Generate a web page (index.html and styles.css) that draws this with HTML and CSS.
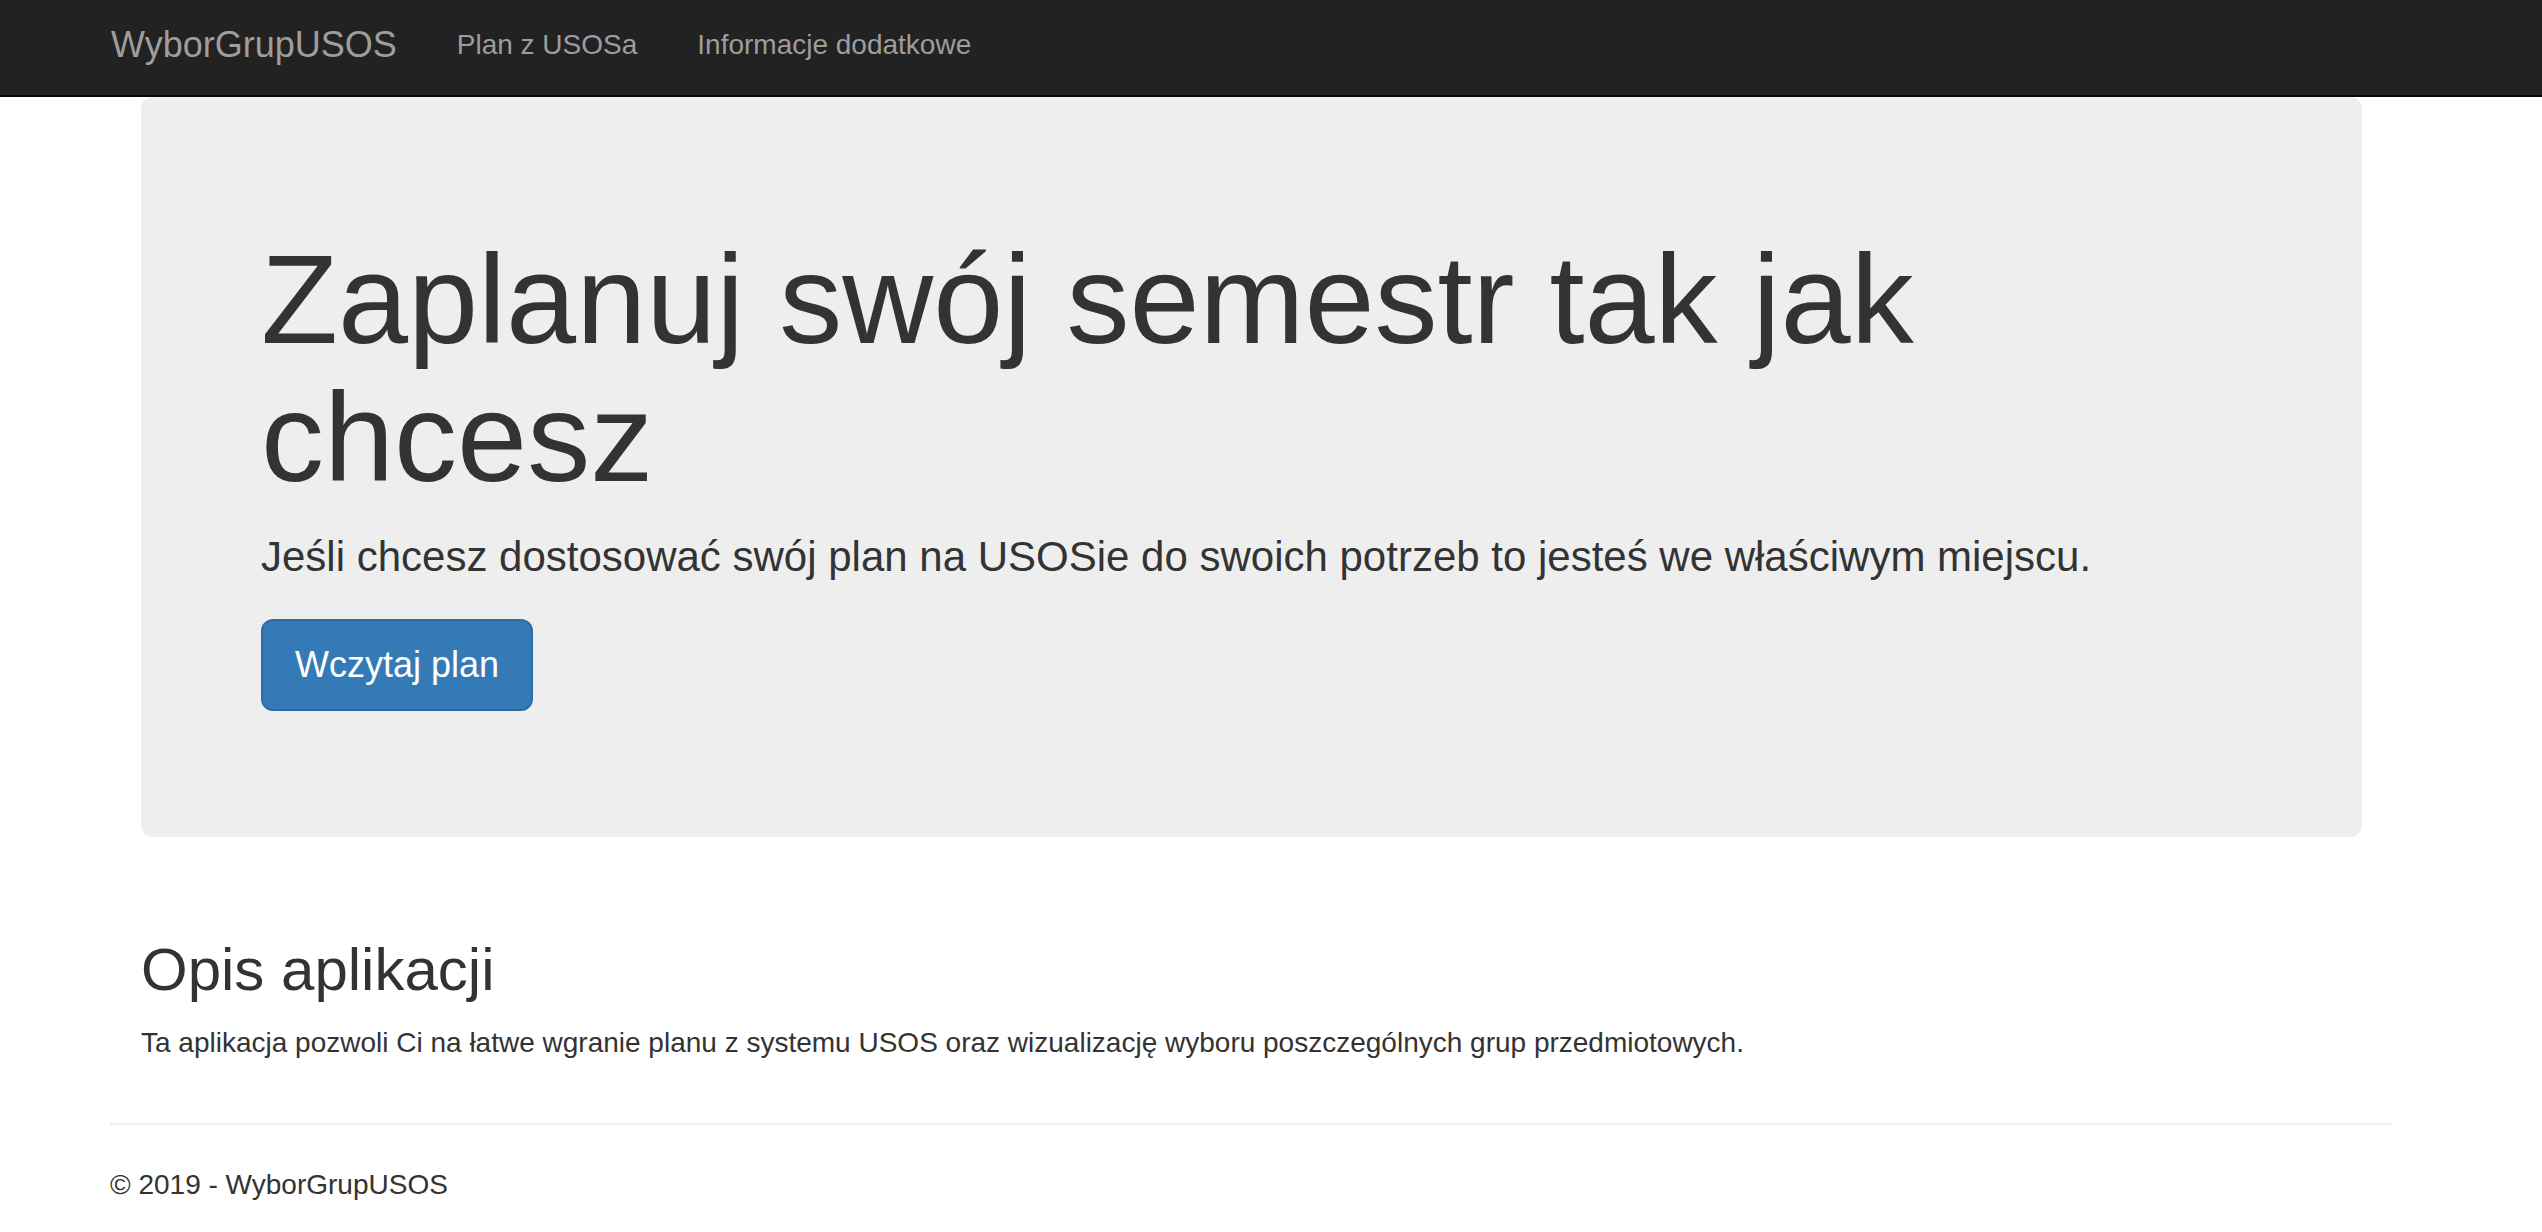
FILE: index.html
```html
<!DOCTYPE html>
<html lang="pl">
<head>
<meta charset="utf-8">
<title>WyborGrupUSOS</title>
<link rel="stylesheet" href="styles.css">
</head>
<body>
<nav class="navbar">
  <div class="nav-inner">
    <a class="brand" href="#">WyborGrupUSOS</a>
    <ul class="nav">
      <li><a href="#">Plan z USOSa</a></li>
      <li><a href="#">Informacje dodatkowe</a></li>
    </ul>
  </div>
</nav>
<div class="page">
  <div class="inner">
    <div class="jumbotron">
      <h1>Zaplanuj swój semestr tak jak chcesz</h1>
      <p class="lead">Jeśli chcesz dostosować swój plan na USOSie do swoich potrzeb to jesteś we właściwym miejscu.</p>
      <div class="actions"><a class="btn" href="#">Wczytaj plan</a></div>
    </div>
    <div class="about">
      <h2>Opis aplikacji</h2>
      <p>Ta aplikacja pozwoli Ci na łatwe wgranie planu z systemu USOS oraz wizualizację wyboru poszczególnych grup przedmiotowych.</p>
    </div>
  </div>
  <hr class="divider">
  <footer class="footer">
    <p>© 2019 - WyborGrupUSOS</p>
  </footer>
</div>
</body>
</html>
```
FILE: styles.css
```css
* { box-sizing: border-box; }
html, body { margin: 0; padding: 0; }
body {
  font-family: "Liberation Sans", Arial, Helvetica, sans-serif;
  color: #333;
  background: #fff;
  font-size: 28px;
  line-height: 40px;
}
a { text-decoration: none; }

.navbar {
  height: 97px;
  background: #222;
  border-bottom: 2px solid #080808;
}
.nav-inner {
  display: flex;
  align-items: flex-start;
  padding-left: 81px;
  padding-top: 25px;
}
.brand {
  color: #9d9d9d;
  font-size: 36px;
  line-height: 40px;
  padding: 0 30px;
}
.nav {
  display: flex;
  list-style: none;
  margin: 0;
  padding: 0;
}
.nav a {
  display: block;
  color: #9d9d9d;
  font-size: 28px;
  line-height: 40px;
  padding: 0 30px;
}

.page {
  margin-left: 110px;
  width: 2281px;
}
.inner {
  padding: 0 29px 0 31px;
}
.jumbotron {
  background: #eee;
  border-radius: 12px;
  padding: 96px 120px;
  margin-bottom: 60px;
}
.jumbotron h1 {
  font-size: 126px;
  line-height: 138px;
  font-weight: 500;
  margin: 38px 0 20px;
}
.jumbotron .lead {
  font-size: 42px;
  line-height: 60px;
  margin: 0 0 32px;
}
.actions {
  margin-bottom: 30px;
}
.btn {
  display: inline-block;
  vertical-align: top;
  background: #337ab7;
  border: 2px solid #2e6da4;
  color: #fff;
  font-size: 36px;
  line-height: 48px;
  padding: 20px 32px;
  border-radius: 12px;
}

.about {
  display: flow-root;
}
.about h2 {
  font-size: 60px;
  line-height: 66px;
  font-weight: 500;
  margin: 40px 0 20px;
}
.about p {
  margin: 0 0 20px;
}
.divider {
  border: 0;
  border-top: 2px solid #eee;
  margin: 40px 0;
}
.footer p {
  margin: 0 0 20px;
}
```
